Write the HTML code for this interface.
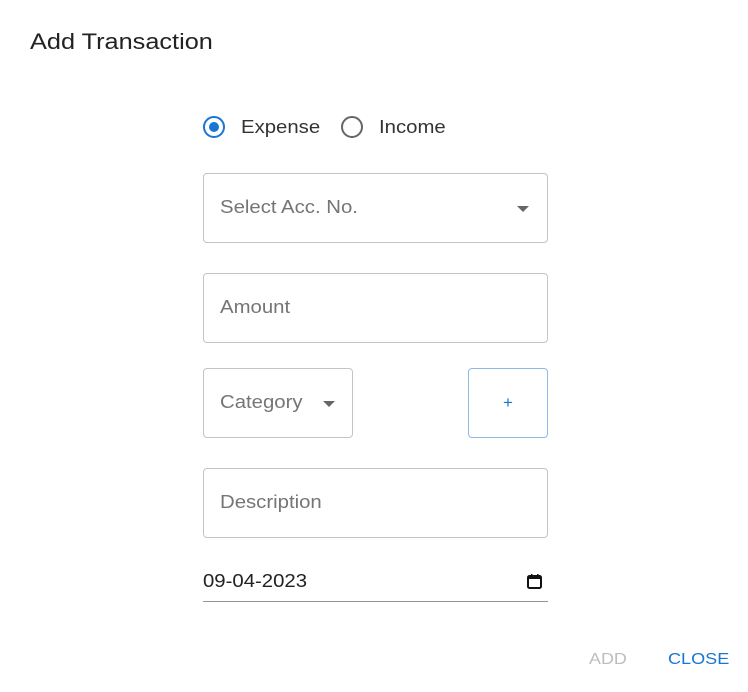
<!DOCTYPE html>
<html><head><style>
body{margin:0;width:748px;height:692px;background:#fff;font-family:"Liberation Sans",sans-serif;position:relative;overflow:hidden}
.a{position:absolute;transform-origin:0 50%;white-space:nowrap}
.s{transform:scaleX(1.13)}
.box{position:absolute;border:1px solid #c4c4c4;border-radius:4px;box-sizing:border-box}
.ph{position:absolute;left:17px;font-size:18px;color:#757575;transform:scaleX(1.13);transform-origin:0 50%;white-space:nowrap}
.arr{position:absolute;width:0;height:0;border-left:6px solid transparent;border-right:6px solid transparent;border-top:6px solid #666}
</style></head><body>
<div class="a" style="left:30px;top:29px;font-size:22px;color:#222;transform:scaleX(1.15)">Add Transaction</div>
<div class="a" style="left:203px;top:116px;width:18px;height:18px;border:2px solid #1976d2;border-radius:50%"></div>
<div class="a" style="left:209px;top:122px;width:10px;height:10px;background:#1976d2;border-radius:50%"></div>
<div class="a s" style="left:241px;top:117px;font-size:18px;color:#333">Expense</div>
<div class="a" style="left:341px;top:116px;width:18px;height:18px;border:2px solid #666;border-radius:50%"></div>
<div class="a s" style="left:379px;top:117px;font-size:18px;color:#333">Income</div>
<div class="box" style="left:203px;top:173px;width:345px;height:70px"><div class="ph" style="top:23px;left:16px">Select Acc. No.</div><div class="arr" style="left:313px;top:32px"></div></div>
<div class="box" style="left:203px;top:273px;width:345px;height:70px"><div class="ph" style="top:23px;left:16px">Amount</div></div>
<div class="box" style="left:203px;top:368px;width:150px;height:70px"><div class="ph" style="top:23px;left:16px">Category</div><div class="arr" style="left:119px;top:32px"></div></div>
<div class="box" style="left:468px;top:368px;width:80px;height:70px;border-color:#90b8e8;color:#1976d2;text-align:center;line-height:68px;font-size:17px">+</div>
<div class="box" style="left:203px;top:468px;width:345px;height:70px"><div class="ph" style="top:23px;left:16px">Description</div></div>
<div class="a s" style="left:203px;top:571px;font-size:18px;color:#222">09-04-2023</div>
<svg class="a" style="left:526px;top:573px" width="18" height="18" viewBox="0 0 18 18"><rect x="2" y="3" width="13" height="12" rx="1.5" fill="none" stroke="#111" stroke-width="2"/><rect x="2" y="3" width="13" height="3" fill="#111"/><rect x="5" y="1" width="1.5" height="3" fill="#111"/><rect x="11" y="1" width="1.5" height="3" fill="#111"/></svg>
<div class="a" style="left:203px;top:601px;width:345px;height:1px;background:#949494"></div>
<div class="a" style="left:589px;top:651px;font-size:16px;color:#bdbdbd;transform:scaleX(1.12)">ADD</div>
<div class="a" style="left:668px;top:651px;font-size:16px;color:#1976d2;transform:scaleX(1.13)">CLOSE</div>
</body></html>
